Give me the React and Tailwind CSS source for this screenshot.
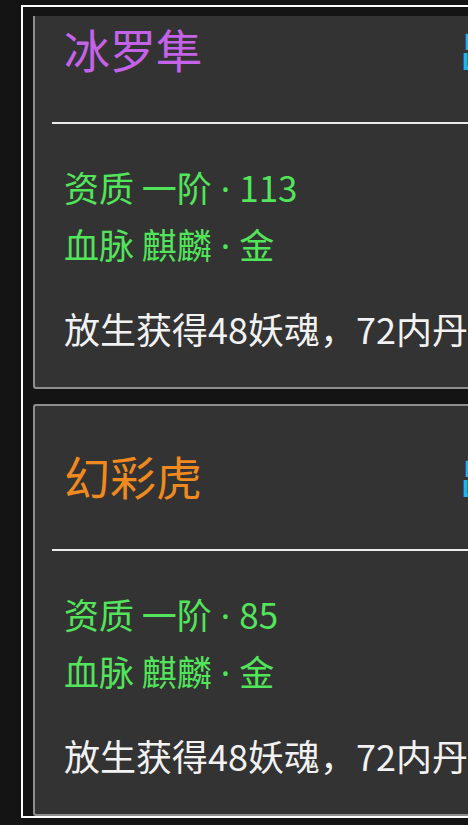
export default function App() {
  const cards = [
    { name: "冰罗隼", color: "text-[#c462e8]", q: "113" },
    { name: "幻彩虎", color: "text-[#f08a1e]", q: "85" },
  ];
  const Dot = () => <span className="font-['Noto_Sans'] px-[9px]">·</span>;
  return (
    <div
      className="w-[468px] h-[825px] overflow-hidden bg-[#141414] pl-[21px] pt-[5px]"
      style={{ fontFamily: '"Noto Sans CJK SC", "Noto Sans", sans-serif' }}
    >
      <div className="w-[640px] h-[813px] border-2 border-r-0 border-white pl-[10px] pt-[9px]">
        <div className="h-full overflow-hidden">
          <div className="-mt-[39px] flex flex-col gap-[15px]">
            {cards.map((c) => (
              <div
                key={c.name}
                className="h-[412px] w-[620px] shrink-0 rounded-[3px] border-2 border-r-0 border-[#8e8e8e] bg-[#333333] pl-[29px] pt-[46px] flex flex-col"
              >
                <div className="flex items-center h-[46px]">
                  <div className={`w-[395px] text-[46px] leading-[46px] ${c.color}`}>{c.name}</div>
                  <div className="text-[46px] leading-[46px] text-[#1eb4ea] whitespace-nowrap">出战</div>
                </div>
                <div className="-ml-[12px] mt-[51px] h-[2px] bg-[#ececec]" />
                <div className="mt-[35px] text-[35px] leading-[55px] text-[#52e45a] whitespace-nowrap">
                  <div>资质 一阶<Dot />{c.q}</div>
                  <div>血脉 麒麟<Dot />金</div>
                </div>
                <div className="mt-[33px] text-[36px] leading-[44px] text-[#f2f2f2] whitespace-nowrap">
                  放生获得48妖魂，72内丹
                </div>
              </div>
            ))}
          </div>
        </div>
      </div>
    </div>
  );
}
